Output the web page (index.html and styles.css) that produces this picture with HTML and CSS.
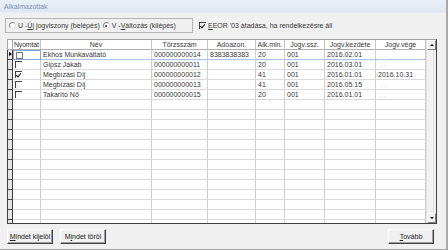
FILE: index.html
```html
<!DOCTYPE html>
<html lang="hu">
<head>
    <meta charset="UTF-8">
    <title>Alkalmazottak</title>
    <link rel="stylesheet" href="styles.css">
</head>
<body>
<div class="window">
    <div class="titlebar">Alkalmazottak</div>

    <div class="options">
        <div class="radio-group">
            <label class="radio"><span class="dot"></span>U - <u>Ú</u>j jogviszony (belépés)</label>
            <label class="radio"><span class="dot checked"></span>V - <u>V</u>áltozás (kilépés)</label>
        </div>
        <label class="check"><span class="box flat on"></span><u>E</u>EOR '03 átadása, ha rendelkezésre áll</label>
    </div>

    <div class="grid">
        <div class="cells">
            <div class="row head">
                <div class="c rh"></div>
                <div class="c">Nyomtat</div>
                <div class="c">Név</div>
                <div class="c">Törzsszám</div>
                <div class="c">Adóazon.</div>
                <div class="c">Alk.min.</div>
                <div class="c">Jogv.ssz.</div>
                <div class="c">Jogv.kezdete</div>
                <div class="c">Jogv.vége</div>
            </div>
            <div class="row sel">
                <div class="c rh"><span class="arrow"></span></div>
                <div class="c cb focus"><span class="box full"></span></div>
                <div class="c">Ekhos Munkaváltató</div>
                <div class="c">000000000014</div>
                <div class="c">8383838383</div>
                <div class="c">20</div>
                <div class="c">001</div>
                <div class="c">2016.02.01</div>
                <div class="c mask">.&nbsp;.</div>
            </div>
            <div class="row">
                <div class="c rh"></div>
                <div class="c cb"><span class="box flat"></span></div>
                <div class="c">Gipsz Jakab</div>
                <div class="c">000000000011</div>
                <div class="c"></div>
                <div class="c">20</div>
                <div class="c">001</div>
                <div class="c">2016.03.01</div>
                <div class="c mask">.&nbsp;.</div>
            </div>
            <div class="row">
                <div class="c rh"></div>
                <div class="c cb"><span class="box flat on"></span></div>
                <div class="c">Megbízási Díj</div>
                <div class="c">000000000012</div>
                <div class="c"></div>
                <div class="c">41</div>
                <div class="c">001</div>
                <div class="c">2016.01.01</div>
                <div class="c">2016.10.31</div>
            </div>
            <div class="row">
                <div class="c rh"></div>
                <div class="c cb"><span class="box flat"></span></div>
                <div class="c">Megbízási Díj</div>
                <div class="c">000000000013</div>
                <div class="c"></div>
                <div class="c">41</div>
                <div class="c">001</div>
                <div class="c">2016.05.15</div>
                <div class="c mask">.&nbsp;.</div>
            </div>
            <div class="row">
                <div class="c rh"></div>
                <div class="c cb"><span class="box flat"></span></div>
                <div class="c">Takarító Nő</div>
                <div class="c">000000000015</div>
                <div class="c"></div>
                <div class="c">20</div>
                <div class="c">001</div>
                <div class="c">2016.01.01</div>
                <div class="c mask">.&nbsp;.</div>
            </div>
        </div>
        <div class="scrollbar">
            <div class="sb-btn"><span class="up"></span></div>
            <div class="sb-track"></div>
            <div class="sb-btn"><span class="down"></span></div>
        </div>
    </div>

    <div class="footer">
        <button class="btn"><u>M</u>indet kijelöl</button>
        <button class="btn">M<u>i</u>ndet töröl</button>
        <button class="btn next"><u>T</u>ovább</button>
    </div>
</div>

<script>
    // fill the grid with empty rows below the data
    const cells = document.querySelector('.cells');
    for (let i = 0; i < 13; i++) {
        const row = document.createElement('div');
        row.className = 'row';
        for (let j = 0; j < 9; j++) {
            const c = document.createElement('div');
            c.className = j === 0 ? 'c rh' : 'c';
            row.appendChild(c);
        }
        cells.appendChild(row);
    }
</script>
</body>
</html>
```

FILE: styles.css
```css
* {
    box-sizing: border-box;
}

body {
    margin: 0;
    font-family: "Liberation Sans", Arial, sans-serif;
    font-size: 7px;
    color: #383838;
    background: #f0f0f0;
}

u {
    text-decoration: underline;
}

.window {
    width: 448px;
    height: 250px;
    border-right: 2px solid #a8a8a8;
    border-bottom: 1px solid #a8a8a8;
    background: #f0f0f0;
    display: flex;
    flex-direction: column;
}

.titlebar {
    height: 13px;
    padding: 3px 0 0 4px;
    line-height: 7px;
    color: #7f92b4;
    background: linear-gradient(#e9eff7, #dde6f1);
    border-bottom: 1px solid #e8ecf2;
}

/* radio + checkbox line */
.options {
    display: flex;
    align-items: center;
    margin: 5px 0 0 5px;
    height: 15px;
}

.radio-group {
    width: 188px;
    height: 15px;
    border: 1px solid #b4b4b4;
    display: flex;
    align-items: center;
    padding-left: 3px;
    gap: 3px;
}

.radio, .check {
    display: flex;
    align-items: center;
    white-space: nowrap;
    line-height: 8px;
}

.dot {
    width: 7px;
    height: 7px;
    border-radius: 50%;
    border: 1px solid #8a8a8a;
    border-right-color: #e0e0e0;
    border-bottom-color: #e0e0e0;
    background: #fff;
    margin-right: 2px;
    position: relative;
}

.dot.checked::after {
    content: "";
    position: absolute;
    left: 1.5px;
    top: 1.5px;
    width: 2px;
    height: 2px;
    border-radius: 50%;
    background: #222;
}

.check {
    margin-left: 6px;
}

.box {
    display: inline-block;
    width: 7px;
    height: 7px;
    position: relative;
    flex: none;
}

.box.full {
    border: 1px solid #7a7a7a;
    background: #fff;
}

.box.flat {
    border-top: 1px solid #404040;
    border-left: 1px solid #404040;
}

.box.on::after {
    content: "";
    position: absolute;
    left: 1px;
    top: 0;
    width: 2px;
    height: 4px;
    border-right: 1px solid #111;
    border-bottom: 1px solid #111;
    transform: rotate(40deg);
}

.check .box {
    margin-right: 2px;
}

/* grid */
.grid {
    display: flex;
    margin: 6px 0 0 7px;
    width: 430px;
    height: 185px;
    background: #fff;
    border-top: 1px solid #a0a0a0;
    border-right: 1px solid #404040;
    border-bottom: 1px solid #404040;
}

.cells {
    width: 419px;
    overflow: hidden;
}

.row {
    display: grid;
    grid-template-columns: 6px 28px 111px 56px 48px 29px 40px 51px 50px;
    height: 10px;
}

.c {
    border-right: 1px solid #cfcfcf;
    border-bottom: 1px solid #dadada;
    padding: 1px 0 0 2px;
    line-height: 8px;
    white-space: nowrap;
    overflow: hidden;
}

.head .c {
    text-align: center;
    padding-left: 0;
    border-right-color: #c4c4c4;
    border-bottom-color: #b0b0b0;
}

.head .c:nth-child(2) {
    text-align: left;
    padding-left: 1px;
    letter-spacing: -0.2px;
}

.c.rh {
    padding: 0;
    background: #e4e4e4;
    border-left: 1px solid #404040;
    border-right: 1px solid #404040;
    border-bottom: 1px solid #404040;
    position: relative;
}

.head .c.rh {
    background: #fff;
    border-color: #a8a8a8;
}

.arrow {
    position: absolute;
    left: 1px;
    top: 2px;
    border-left: 3px solid #000;
    border-top: 2.5px solid transparent;
    border-bottom: 2.5px solid transparent;
}

.sel .c {
    border-bottom-color: #a9c4e6;
}

.sel .c.rh {
    border-bottom-color: #404040;
}

.c.cb {
    padding: 1px 0 0 2px;
}

.c.focus {
    border: 1px solid #7ea6da;
}

.mask {
    color: #b8b8b8;
    padding-left: 4px;
}

/* scrollbar */
.scrollbar {
    width: 10px;
    display: flex;
    flex-direction: column;
    background: #f0f0f0;
    border-left: 1px solid #e0e0e0;
}

.sb-btn {
    height: 10px;
    background: #f0f0f0;
    border: 1px solid #fff;
    border-right-color: #808080;
    border-bottom-color: #808080;
    display: flex;
    justify-content: center;
    align-items: center;
}

.sb-track {
    flex: 1;
    background: linear-gradient(90deg, #f2f2f2 0 6px, #dcdcdc 6px 7px, #f2f2f2 7px);
}

.up {
    border-bottom: 2px solid #000;
    border-left: 2px solid transparent;
    border-right: 2px solid transparent;
}

.down {
    border-top: 2px solid #000;
    border-left: 2px solid transparent;
    border-right: 2px solid transparent;
}

/* buttons */
.footer {
    display: flex;
    gap: 7px;
    margin: 5px 12px 0 7px;
}

.btn {
    width: 46px;
    height: 15px;
    padding: 0;
    font-family: inherit;
    font-size: 7px;
    color: #222;
    background: #f0f0f0;
    border: 1px solid #fff;
    border-right-color: #404040;
    border-bottom-color: #404040;
    box-shadow: inset -1px -1px 0 #a0a0a0;
}

.btn.next {
    margin-left: auto;
}
```
